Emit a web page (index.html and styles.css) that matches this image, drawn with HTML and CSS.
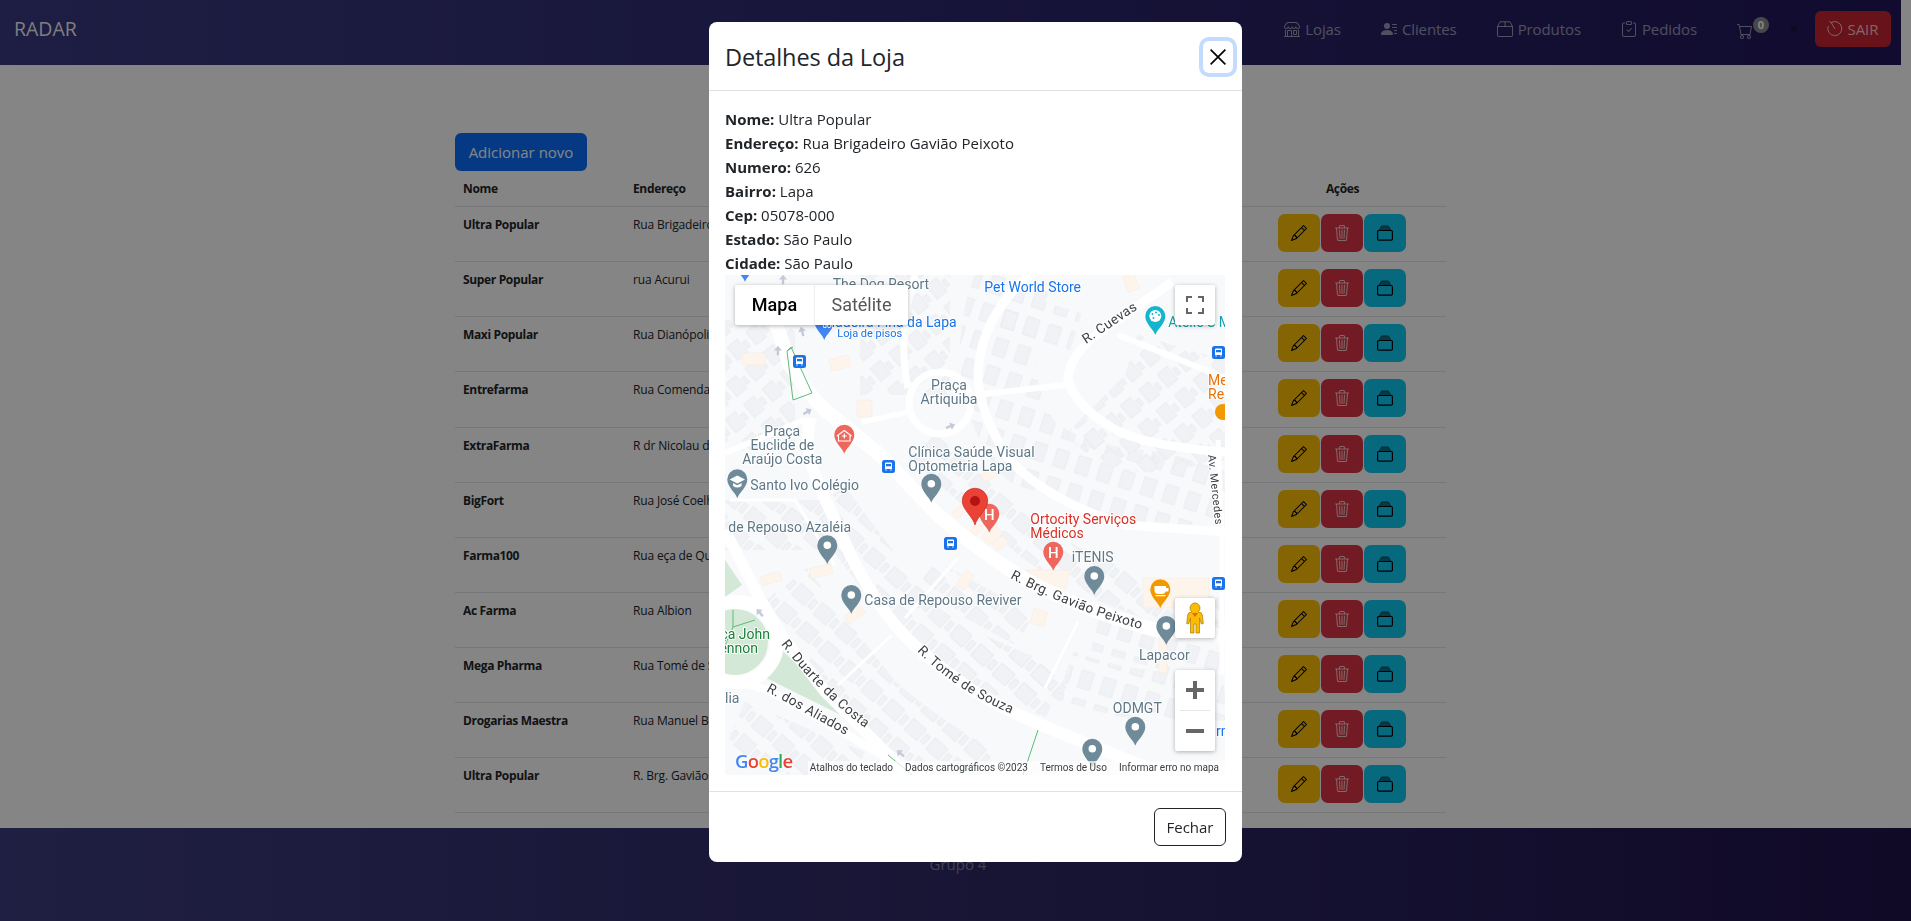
FILE: index.html
```html
<!DOCTYPE html>
<html lang="pt-BR">
<head>
    <meta charset="UTF-8">
    <meta name="viewport" content="width=device-width, initial-scale=1.0">
    <title>RADAR</title>
    <link rel="stylesheet" href="styles.css">
</head>
<body>
    <svg class="sprites" width="0" height="0">
        <symbol id="i-shop" viewBox="0 0 16 16"><path d="M2.97 1.35A1 1 0 0 1 3.73 1h8.54a1 1 0 0 1 .76.35l2.609 3.044A1.5 1.5 0 0 1 16 5.37v.255a2.375 2.375 0 0 1-4.25 1.458A2.371 2.371 0 0 1 9.875 8 2.37 2.37 0 0 1 8 7.083 2.37 2.37 0 0 1 6.125 8a2.37 2.37 0 0 1-1.875-.917A2.375 2.375 0 0 1 0 5.625V5.37a1.5 1.5 0 0 1 .361-.976l2.61-3.045zm1.78 4.275a1.375 1.375 0 0 0 2.75 0 .5.5 0 0 1 1 0 1.375 1.375 0 0 0 2.75 0 .5.5 0 0 1 1 0 1.375 1.375 0 1 0 2.75 0V5.37a.5.5 0 0 0-.12-.325L12.27 2H3.73L1.12 5.045A.5.5 0 0 0 1 5.37v.255a1.375 1.375 0 0 0 2.75 0 .5.5 0 0 1 1 0zM1.5 8.5A.5.5 0 0 1 2 9v6h1v-5a1 1 0 0 1 1-1h3a1 1 0 0 1 1 1v5h6V9a.5.5 0 0 1 1 0v6h.5a.5.5 0 0 1 0 1H.5a.5.5 0 0 1 0-1H1V9a.5.5 0 0 1 .5-.5zM4 15h3v-5H4v5zm5-5a1 1 0 0 1 1-1h2a1 1 0 0 1 1 1v3a1 1 0 0 1-1 1h-2a1 1 0 0 1-1-1v-3zm3 0h-2v3h2v-3z"/></symbol>
        <symbol id="i-clientes" viewBox="0 0 16 16"><path d="M6 8a3 3 0 1 0 0-6 3 3 0 0 0 0 6zm-5 6s-1 0-1-1 1-4 6-4 6 3 6 4-1 1-1 1H1zM11 3.5a.5.5 0 0 1 .5-.5h4a.5.5 0 0 1 0 1h-4a.5.5 0 0 1-.5-.5zm.5 2.5a.5.5 0 0 0 0 1h4a.5.5 0 0 0 0-1h-4zm2 3a.5.5 0 0 0 0 1h2a.5.5 0 0 0 0-1h-2zm0 3a.5.5 0 0 0 0 1h2a.5.5 0 0 0 0-1h-2z"/></symbol>
        <symbol id="i-box" viewBox="0 0 16 16"><path fill="none" stroke="currentColor" d="M.5 5.5 3 .8h10l2.5 4.7v9a1 1 0 0 1-1 1h-13a1 1 0 0 1-1-1zM.5 5.5h15M8 .8v4.7"/></symbol>
        <symbol id="i-pedidos" viewBox="0 0 16 16"><path d="M10.854 7.146a.5.5 0 0 1 0 .708l-3 3a.5.5 0 0 1-.708 0l-1.5-1.5a.5.5 0 1 1 .708-.708L7.5 9.793l2.646-2.647a.5.5 0 0 1 .708 0z"/><path d="M4 1.5H3a2 2 0 0 0-2 2V14a2 2 0 0 0 2 2h10a2 2 0 0 0 2-2V3.5a2 2 0 0 0-2-2h-1v1h1a1 1 0 0 1 1 1V14a1 1 0 0 1-1 1H3a1 1 0 0 1-1-1V3.5a1 1 0 0 1 1-1h1v-1z"/><path d="M9.5 1a.5.5 0 0 1 .5.5v1a.5.5 0 0 1-.5.5h-3a.5.5 0 0 1-.5-.5v-1a.5.5 0 0 1 .5-.5h3zm-3-1A1.5 1.5 0 0 0 5 1.5v1A1.5 1.5 0 0 0 6.5 4h3A1.5 1.5 0 0 0 11 2.5v-1A1.5 1.5 0 0 0 9.5 0h-3z"/></symbol>
        <symbol id="i-cart" viewBox="0 0 16 16"><path d="M0 1.5A.5.5 0 0 1 .5 1H2a.5.5 0 0 1 .485.379L2.89 3H14.5a.5.5 0 0 1 .491.592l-1.5 8A.5.5 0 0 1 13 12H4a.5.5 0 0 1-.491-.408L2.01 3.607 1.61 2H.5a.5.5 0 0 1-.5-.5zM3.102 4l1.313 7h8.17l1.313-7H3.102zM5 12a2 2 0 1 0 0 4 2 2 0 0 0 0-4zm7 0a2 2 0 1 0 0 4 2 2 0 0 0 0-4zm-7 1a1 1 0 1 1 0 2 1 1 0 0 1 0-2zm7 0a1 1 0 1 1 0 2 1 1 0 0 1 0-2z"/></symbol>
        <symbol id="i-sair" viewBox="0 0 16 16"><path fill="none" stroke="currentColor" d="M4.2 1.6A7 7 0 1 1 1.3 5M4.2 1.6 2.4.5M4.2 1.6 8 8"/></symbol>
        <symbol id="i-pencil" viewBox="0 0 16 16"><path d="M12.146.146a.5.5 0 0 1 .708 0l3 3a.5.5 0 0 1 0 .708l-10 10a.5.5 0 0 1-.168.11l-5 2a.5.5 0 0 1-.65-.65l2-5a.5.5 0 0 1 .11-.168l10-10zM11.207 2.5 13.5 4.793 14.793 3.5 12.5 1.207 11.207 2.5zm1.586 3L10.5 3.207 4 9.707V10h.5a.5.5 0 0 1 .5.5v.5h.5a.5.5 0 0 1 .5.5v.5h.293l6.5-6.5zm-9.761 5.175-.106.106-1.528 3.821 3.821-1.528.106-.106A.5.5 0 0 1 5 12.5V12h-.5a.5.5 0 0 1-.5-.5V11h-.5a.5.5 0 0 1-.468-.325z"/></symbol>
        <symbol id="i-trash" viewBox="0 0 16 16"><path d="M6.5 1h3a.5.5 0 0 1 .5.5v1H6v-1a.5.5 0 0 1 .5-.5ZM11 2.5v-1A1.5 1.5 0 0 0 9.5 0h-3A1.5 1.5 0 0 0 5 1.5v1H2.506a.58.58 0 0 0-.01 0H1.5a.5.5 0 0 0 0 1h.538l.853 10.66A2 2 0 0 0 4.885 16h6.23a2 2 0 0 0 1.994-1.84l.853-10.66h.538a.5.5 0 0 0 0-1h-.995a.59.59 0 0 0-.01 0H11Zm1.958 1-.846 10.58a1 1 0 0 1-.997.92h-6.23a1 1 0 0 1-.997-.92L3.042 3.5h9.916Zm-7.487 1a.5.5 0 0 1 .528.47l.5 8.5a.5.5 0 0 1-.998.06L5 5.03a.5.5 0 0 1 .47-.53Zm5.058 0a.5.5 0 0 1 .47.53l-.5 8.5a.5.5 0 1 1-.998-.06l.5-8.5a.5.5 0 0 1 .528-.47ZM8 4.5a.5.5 0 0 1 .5.5v8.5a.5.5 0 0 1-1 0V5a.5.5 0 0 1 .5-.5Z"/></symbol>
        <symbol id="i-stock" viewBox="0 0 16 16"><path fill="#0a6f87" stroke="#06505f" d="M4.6 1h6.8l2.6 4.5H2z"/><rect x=".6" y="5.5" width="14.8" height="9.6" rx="1.2" fill="none" stroke="#000" stroke-width="1.2"/></symbol>

        <symbol id="pin" viewBox="-10 -29 20 29" overflow="visible"><path d="M0 0C-1.5-5.5-10-11-10-19a10 10 0 1 1 20 0C10-11 1.5-5.5 0 0Z"/></symbol>
        <symbol id="bus" viewBox="0 0 13 13"><rect width="13" height="13" rx="2.5" fill="#1a73e8"/><path fill="#fff" d="M3 3.6q0-1 1-1h5q1 0 1 1V9H3zM4 4v2.2h5V4zM3.4 9.4h1.4v1H3.4zM8.2 9.4h1.4v1H8.2z"/></symbol>
        <symbol id="arrow" viewBox="0 0 10 12"><path fill="#c4cad8" d="M5 0 10 6H6.5v6h-3V6H0z"/></symbol>
    </svg>

    <div class="page">
        <nav class="topbar">
            <span class="brand">RADAR</span>
            <div class="nav-links">
                <a class="nav-link"><svg class="nav-icon"><use href="#i-shop"/></svg>Lojas</a>
                <a class="nav-link"><svg class="nav-icon"><use href="#i-clientes"/></svg>Clientes</a>
                <a class="nav-link"><svg class="nav-icon"><use href="#i-box"/></svg>Produtos</a>
                <a class="nav-link"><svg class="nav-icon"><use href="#i-pedidos"/></svg>Pedidos</a>
                <a class="nav-cart"><svg class="nav-icon"><use href="#i-cart"/></svg><span class="badge">0</span></a>
            </div>
            <span class="nav-dot"></span>
            <button class="btn-sair"><svg class="nav-icon"><use href="#i-sair"/></svg>SAIR</button>
        </nav>

        <main class="content">
            <button class="btn-add">Adicionar novo</button>
            <table class="lojas">
                <colgroup><col class="col-nome"><col><col class="col-acoes"></colgroup>
                <thead>
                    <tr><th>Nome</th><th>Endereço</th><th class="center">Ações</th></tr>
                </thead>
                <tbody>
                    <tr><td class="nome">Ultra Popular</td><td>Rua Brigadeiro Gavião Peixoto</td><td class="acoes"><button class="act yellow"><svg><use href="#i-pencil"/></svg></button> <button class="act red"><svg><use href="#i-trash"/></svg></button> <button class="act cyan"><svg><use href="#i-stock"/></svg></button></td></tr>
                    <tr><td class="nome">Super Popular</td><td>rua Acurui</td><td class="acoes"><button class="act yellow"><svg><use href="#i-pencil"/></svg></button> <button class="act red"><svg><use href="#i-trash"/></svg></button> <button class="act cyan"><svg><use href="#i-stock"/></svg></button></td></tr>
                    <tr><td class="nome">Maxi Popular</td><td>Rua Dianópolis</td><td class="acoes"><button class="act yellow"><svg><use href="#i-pencil"/></svg></button> <button class="act red"><svg><use href="#i-trash"/></svg></button> <button class="act cyan"><svg><use href="#i-stock"/></svg></button></td></tr>
                    <tr><td class="nome">Entrefarma</td><td>Rua Comendador Souza</td><td class="acoes"><button class="act yellow"><svg><use href="#i-pencil"/></svg></button> <button class="act red"><svg><use href="#i-trash"/></svg></button> <button class="act cyan"><svg><use href="#i-stock"/></svg></button></td></tr>
                    <tr><td class="nome">ExtraFarma</td><td>R dr Nicolau de Sousa</td><td class="acoes"><button class="act yellow"><svg><use href="#i-pencil"/></svg></button> <button class="act red"><svg><use href="#i-trash"/></svg></button> <button class="act cyan"><svg><use href="#i-stock"/></svg></button></td></tr>
                    <tr><td class="nome">BigFort</td><td>Rua José Coelho</td><td class="acoes"><button class="act yellow"><svg><use href="#i-pencil"/></svg></button> <button class="act red"><svg><use href="#i-trash"/></svg></button> <button class="act cyan"><svg><use href="#i-stock"/></svg></button></td></tr>
                    <tr><td class="nome">Farma100</td><td>Rua eça de Queiroz</td><td class="acoes"><button class="act yellow"><svg><use href="#i-pencil"/></svg></button> <button class="act red"><svg><use href="#i-trash"/></svg></button> <button class="act cyan"><svg><use href="#i-stock"/></svg></button></td></tr>
                    <tr><td class="nome">Ac Farma</td><td>Rua Albion</td><td class="acoes"><button class="act yellow"><svg><use href="#i-pencil"/></svg></button> <button class="act red"><svg><use href="#i-trash"/></svg></button> <button class="act cyan"><svg><use href="#i-stock"/></svg></button></td></tr>
                    <tr><td class="nome">Mega Pharma</td><td>Rua Tomé de Souza</td><td class="acoes"><button class="act yellow"><svg><use href="#i-pencil"/></svg></button> <button class="act red"><svg><use href="#i-trash"/></svg></button> <button class="act cyan"><svg><use href="#i-stock"/></svg></button></td></tr>
                    <tr><td class="nome">Drogarias Maestra</td><td>Rua Manuel Borba</td><td class="acoes"><button class="act yellow"><svg><use href="#i-pencil"/></svg></button> <button class="act red"><svg><use href="#i-trash"/></svg></button> <button class="act cyan"><svg><use href="#i-stock"/></svg></button></td></tr>
                    <tr><td class="nome">Ultra Popular</td><td>R. Brg. Gavião Peixoto</td><td class="acoes"><button class="act yellow"><svg><use href="#i-pencil"/></svg></button> <button class="act red"><svg><use href="#i-trash"/></svg></button> <button class="act cyan"><svg><use href="#i-stock"/></svg></button></td></tr>
                </tbody>
            </table>
        </main>
    </div>

    <footer class="rodape">Grupo 4</footer>

    <div class="backdrop"></div>

    <div class="modal">
        <div class="modal-header">
            <h2>Detalhes da Loja</h2>
            <button class="btn-close" aria-label="Fechar"><svg viewBox="0 0 16 16"><path d="M.6.6l14.8 14.8M15.4.6.6 15.4" stroke="#000" stroke-width="1.6" fill="none"/></svg></button>
        </div>
        <div class="modal-body">
            <p><strong>Nome:</strong> Ultra Popular</p>
            <p><strong>Endereço:</strong> Rua Brigadeiro Gavião Peixoto</p>
            <p><strong>Numero:</strong> 626</p>
            <p><strong>Bairro:</strong> Lapa</p>
            <p><strong>Cep:</strong> 05078-000</p>
            <p><strong>Estado:</strong> São Paulo</p>
            <p><strong>Cidade:</strong> São Paulo</p>

            <div class="map">
                <svg class="map-svg" viewBox="0 0 500 500" width="500" height="500">
                    <defs>
                        <pattern id="casasA" width="29" height="25" patternUnits="userSpaceOnUse" patternTransform="rotate(42)">
                            <rect x="2" y="3" width="17" height="15" class="casa"/>
                            <rect x="22" y="6" width="5" height="10" class="casa"/>
                        </pattern>
                        <pattern id="casasB" width="24" height="27" patternUnits="userSpaceOnUse" patternTransform="rotate(-40)">
                            <rect x="3" y="3" width="13" height="17" class="casa"/>
                            <rect x="18" y="9" width="4" height="8" class="casa"/>
                        </pattern>
                        <pattern id="casasC" width="23" height="29" patternUnits="userSpaceOnUse" patternTransform="rotate(18)">
                            <rect x="2" y="4" width="13" height="18" class="casa"/>
                        </pattern>
                    </defs>
                    <rect width="500" height="500" fill="#f8f9fb"/>

                    <!-- quadras -->
                    <g fill="none">
                        <path d="M0 110 H70" stroke="url(#casasB)" stroke-width="130"/>
                        <path d="M180 0 V120" stroke="url(#casasB)" stroke-width="90"/>
                        <path d="M290 0 Q250 90 300 170 Q350 220 500 215" stroke="url(#casasC)" stroke-width="75"/>
                        <path d="M370 130 Q420 180 500 130 M400 100 L500 130" stroke="url(#casasB)" stroke-width="85"/>
                        <path d="M270 35 L350 60" stroke="url(#casasC)" stroke-width="45"/>
                        <path d="M200 170 L290 250 Q350 310 500 345" stroke="url(#casasA)" stroke-width="40"/>
                        <path d="M0 250 L120 250" stroke="url(#casasA)" stroke-width="50"/>
                        <path d="M100 225 L190 345 Q240 385 330 420" stroke="url(#casasA)" stroke-width="48"/>
                        <path d="M60 310 L150 425 Q200 470 260 500" stroke="url(#casasA)" stroke-width="55"/>
                        <path d="M200 300 L300 355 M225 365 L340 415" stroke="url(#casasA)" stroke-width="36"/>
                        <path d="M340 400 Q420 430 500 420" stroke="url(#casasC)" stroke-width="50"/>
                        <path d="M370 360 L500 395" stroke="url(#casasC)" stroke-width="32"/>
                        <path d="M10 450 L130 500" stroke="url(#casasA)" stroke-width="50"/>
                    </g>

                    <!-- construcoes em destaque -->
                    <g class="destaque">
                        <rect x="17" y="78" width="23" height="12" rx="2"/>
                        <rect x="105" y="82" width="20" height="12" rx="2" transform="rotate(-15 115 88)"/>
                        <rect x="132" y="125" width="15" height="17" rx="1"/>
                        <rect x="235" y="296" width="10" height="18" transform="rotate(35 240 305)"/>
                        <rect x="307" y="335" width="14" height="15" transform="rotate(15 314 342)"/>
                        <rect x="85" y="291" width="22" height="10" transform="rotate(-12 96 296)"/>
                        <rect x="36" y="299" width="20" height="9" transform="rotate(-15 46 303)"/>
                        <rect x="120" y="335" width="20" height="9" transform="rotate(-35 130 340)"/>
                        <rect x="228" y="233" width="12" height="8" transform="rotate(-40 234 237)"/>
                        <rect x="246" y="250" width="12" height="8" transform="rotate(-40 252 254)"/>
                        <rect x="258" y="254" width="18" height="12" transform="rotate(-40 267 260)"/>
                        <rect x="268" y="264" width="14" height="9" transform="rotate(-40 275 268)"/>
                        <rect x="257" y="195" width="16" height="9" transform="rotate(-35 265 200)"/>
                        <path d="M300 295 H345 L338 325 L320 312 Z"/>
                        <rect x="418" y="303" width="66" height="30"/>
                        <rect x="434" y="360" width="8" height="38"/>
                        <rect x="400" y="0" width="12" height="16" transform="rotate(-20 406 8)"/>
                    </g>

                    <!-- parques -->
                    <path class="verde" d="M0 285 L17 310 L0 322 Z"/>
                    <path class="verde" d="M35 400 L55 373 L130 447 Z"/>

                    <!-- ruas -->
                    <g class="ruas" fill="none">
                        <path stroke-width="14" d="M45 30 L65 90 Q80 115 100 135 L155 180 L213 240 Q250 272 285 295 Q340 330 430 355 L500 360"/>
                        <path stroke-width="12" d="M85 143 L82 170 Q87 195 97 217 L127 283 Q142 312 160 337 Q175 358 197 377 Q222 398 250 417 Q290 440 333 457 L433 497 L445 505"/>
                        <path stroke-width="11" d="M0 255 L33 320 L60 365 L100 417 L157 473 L187 505"/>
                        <path stroke-width="8" d="M0 403 L43 415 L123 460 L165 485"/>
                        <path stroke-width="9" d="M310 -5 Q255 40 253 100 Q253 135 283 183 Q320 225 400 250 L500 257"/>
                        <path stroke-width="9" d="M447 7 L367 63 Q343 85 343 105 Q350 130 383 150 Q410 170 500 177"/>
                        <path stroke-width="6" d="M250 120 L340 110"/>
                        <path stroke-width="5" d="M137 147 L183 137"/>
                        <path stroke-width="7" d="M190 0 Q172 60 183 113"/>
                        <path stroke-width="6" d="M393 60 L500 103"/>
                        <path stroke-width="5" d="M493 165 L497 260 L497 400"/>
                        <path stroke-width="6" d="M0 178 L80 145"/>
                        <path stroke-width="3" d="M5 225 H70 L110 290 M233 283 L180 343 M353 347 L320 413 M167 360 L113 410"/>
                        <circle cx="215" cy="128" r="31" stroke-width="7"/>
                        <circle cx="12" cy="367" r="40" stroke-width="14"/>
                    </g>
                    <circle cx="10" cy="367" r="33" class="verde"/>
                    <g class="verde-linha" fill="none">
                        <path d="M66 72 L62 76 L68 125 L87 118 L66 72 M62 76 L68 72"/>
                        <path d="M313 455 L298 500"/>
                        <path d="M163 480 L187 500"/>
                        <path d="M8 335 V352 M-2 375 L8 352 L30 345"/>
                    </g>

                    <!-- setas -->
                    <use href="#arrow" x="49" y="70" width="8" height="11"/>
                    <use href="#arrow" x="73" y="51" width="8" height="11" transform="rotate(-15 77 56)"/>
                    <use href="#arrow" x="54" y="-1" width="8" height="11"/>
                    <use href="#arrow" x="78" y="131" width="8" height="11" transform="rotate(60 82 137)"/>
                    <use href="#arrow" x="222" y="146" width="8" height="11" transform="rotate(70 226 151)"/>
                    <use href="#arrow" x="31" y="332" width="8" height="11" transform="rotate(-40 35 338)"/>
                    <use href="#arrow" x="171" y="473" width="8" height="11" transform="rotate(-50 175 478)"/>

                    <!-- pinos -->
                    <g class="pin-cinza">
                        <use href="#pin" x="196.3" y="198.7" width="20" height="29"/>
                        <use href="#pin" x="92.3" y="260.3" width="20" height="29"/>
                        <use href="#pin" x="116.3" y="310" width="20" height="29"/>
                        <use href="#pin" x="359.3" y="291" width="20" height="29"/>
                        <use href="#pin" x="431.3" y="341" width="20" height="29"/>
                        <use href="#pin" x="400.3" y="441.7" width="20" height="29"/>
                        <use href="#pin" x="357.3" y="463.7" width="20" height="29"/>
                        <use href="#pin" x="2.3" y="194.3" width="20" height="29"/>
                    </g>
                    <g fill="#fff">
                        <circle cx="206.3" cy="208.7" r="3.8"/>
                        <circle cx="102.3" cy="270.3" r="3.8"/>
                        <circle cx="126.3" cy="320" r="3.8"/>
                        <circle cx="369.3" cy="301" r="3.8"/>
                        <circle cx="441.3" cy="351" r="3.8"/>
                        <circle cx="410.3" cy="451.7" r="3.8"/>
                        <circle cx="367.3" cy="473.7" r="3.8"/>
                        <path d="M12.3 200.5 L20 204.5 12.3 208.5 4.6 204.5Z M8 208 V211 Q12.3 214 16.6 211 V208 L12.3 210.2Z"/>
                    </g>
                    <use href="#pin" x="109.3" y="149.7" width="20" height="29" class="pin-vermelho"/>
                    <path fill="none" stroke="#fff" stroke-width="1.1" d="M113.5 160.5V166H125V160.5M112 161 119.3 155.5 126.5 161M119.3 158.5V163.5M116.8 161H121.8"/>
                    <use href="#pin" x="254.3" y="228.7" width="20" height="29" class="pin-vermelho"/>
                    <use href="#pin" x="318.3" y="266.7" width="20" height="29" class="pin-vermelho"/>
                    <text x="264.3" y="245" class="pin-h">H</text>
                    <text x="328.3" y="283" class="pin-h">H</text>
                    <use href="#pin" x="425.3" y="304.3" width="20" height="29" class="pin-laranja"/>
                    <path fill="#fff" d="M429.5 311H441V313H443.5V316.5H440.5Q440 319 437 319H433.5Q430 319 429.5 316ZM430 320H441L440 321.3H431Z"/>
                    <use href="#pin" x="420.3" y="31" width="20" height="29" class="pin-teal"/>
                    <circle cx="430.3" cy="41" r="6" fill="#fff"/>
                    <g fill="#12b5cb"><circle cx="427.5" cy="39" r="1"/><circle cx="431" cy="37.5" r="1"/><circle cx="434" cy="40" r="1"/><circle cx="428.5" cy="43" r="1"/></g>
                    <use href="#pin" x="89.3" y="36" width="20" height="29" fill="#4285f4"/>
                    <use href="#pin" x="10" y="-22" width="20" height="29" fill="#4285f4"/>
                    <circle cx="498" cy="137" r="8" fill="#f29900"/>

                    <use href="#bus" x="68" y="80" width="13" height="13"/>
                    <use href="#bus" x="157" y="185" width="13" height="13"/>
                    <use href="#bus" x="219" y="262" width="13" height="13"/>
                    <use href="#bus" x="487" y="71" width="13" height="13"/>
                    <use href="#bus" x="487" y="302" width="13" height="13"/>

                    <!-- marcador da loja -->
                    <path fill="#ea4335" stroke="#c5221f" stroke-width=".6" d="M250 250C248 242 237.2 234 237.2 226a12.8 12.8 0 1 1 25.6 0C262.8 234 252 242 250 250Z"/>
                    <circle cx="250" cy="226" r="5" fill="#b31412"/>

                    <!-- nomes -->
                    <g class="lbl">
                        <text x="107.7" y="14" class="cinza">The Dog Resort</text>
                        <text x="259.3" y="16.5" class="azul">Pet World Store</text>
                        <text x="231.7" y="52" class="azul" text-anchor="end">Madeira Fina da Lapa</text>
                        <text x="112.3" y="62" class="azul menor">Loja de pisos</text>
                        <text x="443.3" y="52" class="teal">Ateliê S M</text>
                        <text x="483" y="110" class="laranja">Me</text>
                        <text x="483" y="124" class="laranja">Re</text>
                        <text x="224" y="114.5" class="cinza" text-anchor="middle">Praça</text>
                        <text x="224" y="128.5" class="cinza" text-anchor="middle">Artiquiba</text>
                        <text x="57.3" y="160.5" class="cinza" text-anchor="middle">Praça</text>
                        <text x="57.3" y="174.5" class="cinza" text-anchor="middle">Euclide de</text>
                        <text x="57.3" y="188.5" class="cinza" text-anchor="middle">Araújo Costa</text>
                        <text x="183.3" y="181.5" class="cinza">Clínica Saúde Visual</text>
                        <text x="183.3" y="195.5" class="cinza">Optometria Lapa</text>
                        <text x="25.3" y="215" class="cinza">Santo Ivo Colégio</text>
                        <text x="3.3" y="257" class="cinza">de Repouso Azaléia</text>
                        <text x="305.3" y="249" class="vermelho">Ortocity Serviços</text>
                        <text x="305.3" y="263" class="vermelho">Médicos</text>
                        <text x="346.7" y="287" class="cinza">iTENIS</text>
                        <text x="139.3" y="330" class="cinza">Casa de Repouso Reviver</text>
                        <text x="439.3" y="385" class="cinza" text-anchor="middle">Lapacor</text>
                        <text x="412.3" y="438" class="cinza" text-anchor="middle">ODMGT</text>
                        <text x="491" y="461" class="azul">rn</text>
                        <text x="45" y="364" class="verde-txt" text-anchor="end">ça John</text>
                        <text x="33" y="378" class="verde-txt" text-anchor="end">ennon</text>
                        <text x="0" y="428" class="cinza">lia</text>
                        <text class="rua menor" transform="translate(483 180) rotate(84)">Av. Mercedes</text>
                        <text class="rua" transform="translate(361 69) rotate(-34)">R. Cuevas</text>
                        <path id="p-gaviao" d="M285 303 Q350 337 420 355" fill="none"/>
                        <path id="p-tome" d="M192 376 Q232 417 292 441" fill="none"/>
                        <path id="p-duarte" d="M56 369 Q95 420 144 456" fill="none"/>
                        <path id="p-aliados" d="M41 416 L124 462" fill="none"/>
                        <text class="rua"><textPath href="#p-gaviao">R. Brg. Gavião Peixoto</textPath></text>
                        <text class="rua"><textPath href="#p-tome">R. Tomé de Souza</textPath></text>
                        <text class="rua"><textPath href="#p-duarte">R. Duarte da Costa</textPath></text>
                        <text class="rua"><textPath href="#p-aliados">R. dos Aliados</textPath></text>
                    </g>
                </svg>

                <div class="map-type">
                    <span class="map-type-on">Mapa</span>
                    <span class="map-type-off">Satélite</span>
                </div>
                <button class="map-ctl ctl-full"><svg viewBox="0 0 18 18" width="18" height="18"><path fill="#666" d="M0 0h6v2H2v4H0zM12 0h6v6h-2V2h-4zM0 12h2v4h4v2H0zM16 12h2v6h-6v-2h4z"/></svg></button>
                <button class="map-ctl ctl-peg"><svg viewBox="0 0 40 40" width="40" height="40"><path fill="#fbbc04" stroke="#a8780a" stroke-width=".7" d="M20 5a5 5 0 0 1 5 5 5 5 0 0 1-2 4q4 0 4.3 3l1 8.5-2 .5-1.8-6V35h-3.5v-9h-2v9H15.500V20l-1.800 6-2-.5 1-8.500q.3-3 4.300-3a5 5 0 0 1-2-4 5 5 0 0 1 5-5Z"/><path fill="#e2661c" d="M17 15h6l-3 4z"/></svg></button>
                <div class="map-zoom">
                    <button class="zoom-btn"><svg viewBox="0 0 18 18" width="18" height="18"><path fill="#666" d="M7 0h4v7h7v4h-7v7H7v-7H0V7h7z"/></svg></button>
                    <span class="zoom-sep"></span>
                    <button class="zoom-btn"><svg viewBox="0 0 18 18" width="18" height="18"><path fill="#666" d="M0 7h18v4H0z"/></svg></button>
                </div>
                <span class="google"><b class="g-b">G</b><b class="g-r">o</b><b class="g-y">o</b><b class="g-b">g</b><b class="g-g">l</b><b class="g-r">e</b></span>
                <div class="map-attr">
                    <span>Atalhos do teclado</span>
                    <span>Dados cartográficos ©2023</span>
                    <span>Termos de Uso</span>
                    <span>Informar erro no mapa</span>
                </div>
            </div>
        </div>
        <div class="modal-footer">
            <button class="btn-fechar">Fechar</button>
        </div>
    </div>
</body>
</html>
```

FILE: styles.css
```css
* {
    margin: 0;
    padding: 0;
    box-sizing: border-box;
}

html, body {
    height: 921px;
    overflow: hidden;
}

body {
    font-family: "Open Sans", "Noto Sans", sans-serif;
    font-size: 15px;
    line-height: 24px;
    color: #212529;
    background: #fff;
    display: flex;
    flex-direction: column;
}

button {
    font-family: inherit;
    border: none;
    cursor: pointer;
}

.sprites {
    position: absolute;
}

.page {
    flex: 1;
    padding-right: 10px;
    display: flex;
    flex-direction: column;
}

/* barra superior */
.topbar {
    height: 65px;
    display: flex;
    align-items: center;
    padding: 0 10px 7px 14px;
    background: linear-gradient(90deg, #3a3a82, #20165a);
    color: rgba(255, 255, 255, 0.55);
}

.brand {
    font-size: 19.5px;
    color: rgba(255, 255, 255, 0.95);
    margin-right: auto;
}

.nav-links {
    display: flex;
    align-items: center;
    gap: 40px;
}

.nav-link {
    display: flex;
    align-items: center;
    gap: 5px;
    font-size: 15px;
    letter-spacing: -0.1px;
}

.nav-icon {
    width: 16px;
    height: 16px;
    fill: currentColor;
    flex: none;
}

.nav-cart {
    position: relative;
    display: flex;
    width: 33px;
    padding-top: 3px;
}

.badge {
    position: absolute;
    left: 16px;
    top: -3px;
    width: 16px;
    height: 16px;
    border-radius: 50%;
    background: #8a8a8f;
    color: #fff;
    font-size: 11px;
    font-weight: 700;
    line-height: 16px;
    text-align: center;
}

.nav-dot {
    width: 6px;
    height: 6px;
    margin: 0 18px 0 21px;
    border-radius: 50%;
    background: #1a1440;
}

.btn-sair {
    width: 76px;
    height: 36px;
    display: flex;
    align-items: center;
    justify-content: center;
    gap: 4px;
    border-radius: 6px;
    background: #c82333;
    color: rgba(255, 255, 255, 0.75);
    font-size: 15px;
}

/* tabela */
.content {
    width: 991px;
    margin: 0 auto;
    padding-top: 68px;
}

.btn-add {
    display: block;
    width: 132px;
    height: 38px;
    border-radius: 6px;
    background: #0d6efd;
    color: #fff;
    font-size: 15px;
}

.lojas {
    width: 100%;
    table-layout: fixed;
    border-collapse: collapse;
    font-size: 12px;
    line-height: 19px;
    letter-spacing: -0.15px;
}

.col-nome {
    width: 170px;
}

.col-acoes {
    width: 206px;
}

.lojas th {
    height: 33px;
    padding: 8px;
    text-align: left;
    font-weight: 700;
    letter-spacing: -0.35px;
    border-bottom: 1px solid #dee2e6;
}

.lojas th.center {
    padding-right: 9px;
    text-align: center;
}

.lojas td {
    height: 55.13px;
    padding: 8px;
    vertical-align: top;
    border-bottom: 1px solid #dee2e6;
    white-space: nowrap;
    overflow: hidden;
}

.lojas .nome {
    font-weight: 700;
    letter-spacing: -0.35px;
}

.lojas .acoes {
    padding: 7px 10px 8px 8px;
    font-size: 0;
    text-align: center;
}

.act {
    display: inline-flex;
    align-items: center;
    justify-content: center;
    width: 42px;
    height: 38px;
    margin-right: 1px;
    border-radius: 7px;
    vertical-align: top;
}

.act:last-child {
    margin-right: 0;
}

.act svg {
    width: 16px;
    height: 16px;
}

.yellow {
    background: #ffc107;
}

.red {
    background: #dc3545;
    fill: #fff;
}

.red svg {
    opacity: 0.75;
}

.cyan {
    background: #0dcaf0;
}

/* rodape */
.rodape {
    height: 93px;
    padding-top: 24px;
    text-align: center;
    text-indent: 5px;
    font-size: 15px;
    background: linear-gradient(90deg, #3d3d80, #20144c);
    color: rgba(255, 255, 255, 0.4);
}

/* modal */
.backdrop {
    position: fixed;
    inset: 0;
    background: rgba(0, 0, 0, 0.48);
}

.modal {
    position: absolute;
    left: 709px;
    top: 22px;
    width: 533px;
    height: 840px;
    background: #fff;
    border-radius: 8px;
    display: flex;
    flex-direction: column;
}

.modal-header {
    height: 69px;
    display: flex;
    align-items: center;
    justify-content: space-between;
    padding: 2px 9px 0 16px;
    border-bottom: 1px solid #dee2e6;
}

.modal-header h2 {
    font-size: 23.5px;
    font-weight: 500;
    letter-spacing: -0.1px;
}

.btn-close {
    width: 30px;
    height: 32px;
    display: flex;
    align-items: center;
    justify-content: center;
    background: transparent;
    border-radius: 6px;
    box-shadow: 0 0 0 4px #c2dbfe;
}

.btn-close svg {
    width: 16px;
    height: 16px;
}

.modal-body {
    flex: 1;
    padding: 16px 16px 0;
}

.map {
    position: relative;
    width: 500px;
    height: 500px;
    overflow: hidden;
}

.map-svg {
    display: block;
}

.casa {
    fill: #f1f2f5;
    stroke: #e8e9ed;
    stroke-width: 0.7;
}

.destaque {
    fill: #fdf4ec;
    stroke: #fbeadc;
    stroke-width: 0.5;
}

.verde {
    fill: #d3e8d6;
}

.verde-linha {
    stroke: #5fbb7a;
    stroke-width: 1;
}

.ruas {
    stroke: #fff;
}

.pin-cinza {
    fill: #6f8a99;
}

.pin-vermelho {
    fill: #ee675c;
}

.pin-laranja {
    fill: #f29900;
}

.pin-teal {
    fill: #12b5cb;
}

.pin-h {
    font-family: Roboto, sans-serif;
    font-size: 15px;
    font-weight: 500;
    fill: #fff;
    text-anchor: middle;
}

.lbl text {
    font-family: Roboto, sans-serif;
    font-size: 14px;
    paint-order: stroke;
    stroke: #fff;
    stroke-width: 2px;
    stroke-linejoin: round;
}

.lbl .cinza {
    fill: #5f7888;
}

.lbl .azul {
    fill: #1a73e8;
}

.lbl .teal {
    fill: #129eaf;
}

.lbl .laranja {
    fill: #e8710a;
}

.lbl .vermelho {
    fill: #d93025;
}

.lbl .verde-txt {
    fill: #188038;
}

.lbl .rua {
    fill: #3c4043;
    font-size: 13.5px;
    letter-spacing: 0.4px;
}

.lbl .menor {
    font-size: 11px;
}

.map-type {
    position: absolute;
    left: 10px;
    top: 10px;
    height: 40px;
    display: flex;
    font-family: Roboto, sans-serif;
    font-size: 18px;
    line-height: 40px;
    background: #fff;
    border-radius: 2px;
    box-shadow: 0 1px 4px rgba(0, 0, 0, 0.3);
}

.map-type-on {
    width: 79px;
    text-align: center;
    font-weight: 500;
    color: #000;
}

.map-type-off {
    width: 94px;
    text-align: center;
    color: #565656;
    border-left: 1px solid #eee;
}

.map-ctl {
    position: absolute;
    left: 450px;
    width: 40px;
    height: 40px;
    display: flex;
    align-items: center;
    justify-content: center;
    background: #fff;
    border-radius: 2px;
    box-shadow: 0 1px 4px rgba(0, 0, 0, 0.3);
}

.ctl-full {
    top: 10px;
}

.ctl-peg {
    top: 323px;
}

.map-zoom {
    position: absolute;
    left: 450px;
    top: 395px;
    width: 40px;
    height: 81px;
    display: flex;
    flex-direction: column;
    align-items: center;
    background: #fff;
    border-radius: 2px;
    box-shadow: 0 1px 4px rgba(0, 0, 0, 0.3);
}

.zoom-btn {
    width: 40px;
    height: 40px;
    display: flex;
    align-items: center;
    justify-content: center;
    background: transparent;
}

.zoom-sep {
    width: 30px;
    height: 1px;
    background: #e6e6e6;
}

.google {
    position: absolute;
    left: 10px;
    bottom: 2px;
    font-family: "Open Sans", sans-serif;
    font-size: 18.5px;
    line-height: 24px;
    letter-spacing: -0.8px;
    text-shadow: 0 0 2px #fff, 0 0 2px #fff;
}

.google b {
    font-weight: 600;
}

.g-b {
    color: #4285f4;
}

.g-r {
    color: #ea4335;
}

.g-y {
    color: #fbbc04;
}

.g-g {
    color: #34a853;
}

.map-attr {
    position: absolute;
    right: 0;
    bottom: 0;
    height: 14px;
    display: flex;
    gap: 12px;
    padding: 0 6px 0 2px;
    font-family: Roboto, sans-serif;
    font-size: 10px;
    line-height: 14px;
    color: #3c4043;
    background: rgba(255, 255, 255, 0.7);
}

.modal-footer {
    height: 71px;
    display: flex;
    align-items: center;
    justify-content: flex-end;
    padding: 0 16px;
    border-top: 1px solid #dee2e6;
}

.btn-fechar {
    width: 72px;
    height: 38px;
    border: 1px solid #212529;
    border-radius: 6px;
    background: #fff;
    color: #212529;
    font-size: 15px;
}
```
